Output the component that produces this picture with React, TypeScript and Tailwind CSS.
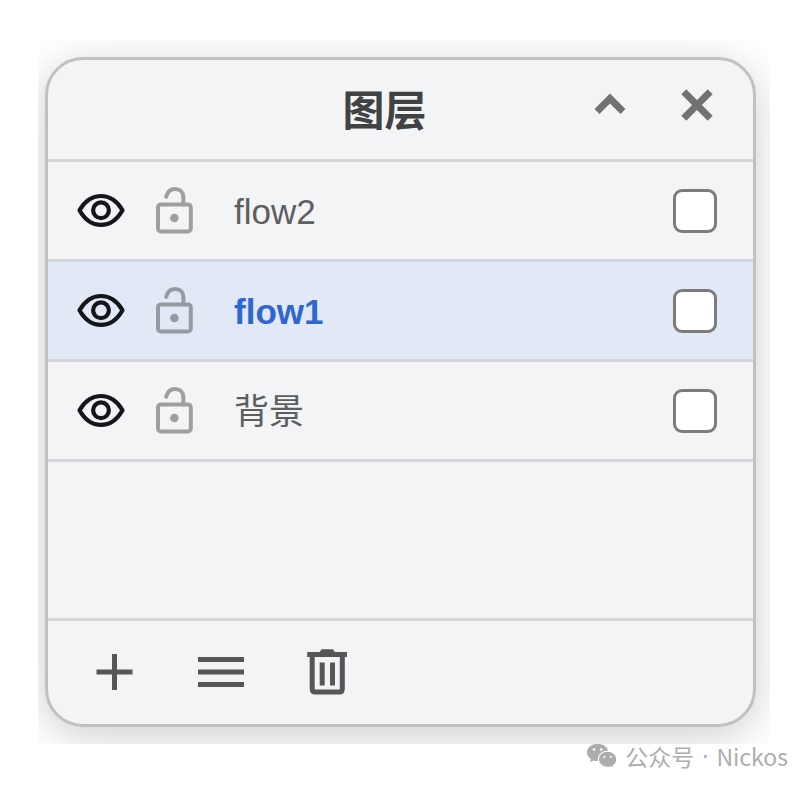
import React, { useState } from 'react';

type Layer = {
  id: string;
  name: string;
};

const layers: Layer[] = [
  { id: 'flow2', name: 'flow2' },
  { id: 'flow1', name: 'flow1' },
  { id: 'background', name: '背景' },
];

function EyeIcon() {
  return (
    <svg width="50" height="36" viewBox="0 0 50 36" fill="none" stroke="currentColor" strokeWidth="4.2">
      <path d="M3.5 17.2C9 7.7 17 3 25 3S41 7.7 46.5 17.2C41 27 33 31.8 25 31.8S9 27 3.5 17.2Z" strokeLinejoin="round" />
      <circle cx="25" cy="17.3" r="7.9" />
    </svg>
  );
}

function UnlockIcon() {
  return (
    <svg width="38" height="48" viewBox="0 0 38 48" fill="none" stroke="currentColor" strokeWidth="4">
      <rect x="2" y="17.4" width="32.8" height="27" rx="3" />
      <path d="M10.2 9.8C11.4 5 14.6 2 19 2C24 2 27.4 5.4 27.4 10.2V17" strokeLinecap="round" />
      <circle cx="18.4" cy="31" r="4.3" fill="currentColor" stroke="none" />
    </svg>
  );
}

function ChevronUpIcon() {
  return (
    <svg width="48" height="48" viewBox="0 0 48 48" fill="none" stroke="currentColor" strokeWidth="7">
      <path d="M12 30.5L25 17.5L38 30.5" />
    </svg>
  );
}

function CloseIcon() {
  return (
    <svg width="48" height="48" viewBox="0 0 48 48" fill="none" stroke="currentColor" strokeWidth="7">
      <path d="M10.8 10.8L37.2 37.2M37.2 10.8L10.8 37.2" />
    </svg>
  );
}

function PlusIcon() {
  return (
    <svg width="48" height="48" viewBox="0 0 48 48" fill="none" stroke="currentColor" strokeWidth="5">
      <path d="M23.5 5V41M5.500 23H41.500" />
    </svg>
  );
}

function MenuIcon() {
  return (
    <svg width="48" height="48" viewBox="0 0 48 48" fill="none" stroke="currentColor" strokeWidth="5">
      <path d="M1 10.500H47M1 23H47M1 35.500H47" />
    </svg>
  );
}

function TrashIcon() {
  return (
    <svg width="48" height="48" viewBox="0 0 48 48" fill="none" stroke="currentColor" strokeWidth="5">
      <path d="M4.200 5.500H44" />
      <path d="M16.500 3.500L18.500 0.300H30L32 3.500V5H16.500Z" fill="currentColor" stroke="none" />
      <path d="M9.200 6V40Q9.200 43 12.200 43H36.300Q39.300 43 39.300 40V6" />
      <path d="M19.200 13.500V36.500M29.500 13.500V36.500" />
    </svg>
  );
}

function WechatIcon() {
  return (
    <svg width="30" height="26" viewBox="0 0 30 26" fill="currentColor">
      <path d="M10.7 0.7C4.8 0.7 0 4.6 0 9.4C0 12.1 1.5 14.5 3.9 16.1L2.9 19.2L6.5 17.4C7.8 17.9 9.2 18.1 10.7 18.1C16.6 18.1 21.4 14.2 21.4 9.4S16.6 0.7 10.7 0.7Z" />
      <path
        d="M20.5 8.2C15.3 8.2 11.3 11.9 11.3 16.3S15.3 24.4 20.5 24.4C21.8 24.4 23 24.2 24.1 23.8L27.2 25.4L26.4 22.6C28.6 21.1 29.9 18.8 29.9 16.3C29.9 11.9 25.7 8.2 20.5 8.2Z"
        stroke="white"
        strokeWidth="1.2"
      />
      <g fill="white">
        <circle cx="7" cy="6.5" r="1.3" />
        <circle cx="14.2" cy="6.5" r="1.3" />
        <circle cx="17.4" cy="13.8" r="1.1" />
        <circle cx="23.8" cy="13.8" r="1.1" />
      </g>
    </svg>
  );
}

function LayerRow({ layer, active, onSelect }: { layer: Layer; active: boolean; onSelect: () => void }) {
  return (
    <li
      className={`flex h-[100px] items-center border-b-[3px] border-[#d6d6da] pl-7 pr-9 ${
        active ? 'bg-[#e1e8f6]' : ''
      }`}
    >
      <button type="button" aria-label="Toggle visibility" className="mr-[30px] text-[#151619]">
        <EyeIcon />
      </button>
      <button type="button" aria-label="Toggle lock" className="mr-10 text-[#707275] opacity-65">
        <UnlockIcon />
      </button>
      <label
        htmlFor={layer.id}
        onClick={onSelect}
        className={`flex-1 pt-[2px] text-[35px] leading-[48px] ${
          active ? 'font-bold text-[#2f66cf]' : 'text-[#5e5e60]'
        }`}
      >
        {layer.name}
      </label>
      <input
        id={layer.id}
        type="checkbox"
        className="size-11 appearance-none rounded-[9px] border-[3px] border-[#7b7d7d] bg-white checked:bg-[#2f66cf]"
      />
    </li>
  );
}

export default function App() {
  const [activeId, setActiveId] = useState('flow1');

  return (
    <div className="min-h-screen bg-white pt-10 font-['Liberation_Sans','Noto_Sans_CJK_SC',sans-serif]">
      <div className="ml-[38px] mr-[42px] overflow-hidden pt-[17px] pr-[14px] pb-[17px] pl-[7px]">
        <section className="overflow-hidden rounded-[38px] border-[3px] border-[#c0c1c2] bg-[#f3f4f6] shadow-[0_8px_40px_rgba(0,0,0,0.2)]">
          {/* Header */}
          <header className="grid h-[102px] grid-cols-[1fr_auto_1fr] items-center border-b-[3px] border-[#d6d7d9] pr-8">
            <h1 className="col-start-2 pt-1 text-[42px] font-bold leading-[60px] text-[#424244]">图层</h1>
            <div className="flex justify-end gap-10 pb-[10px] text-[#717373]">
              <button type="button" aria-label="Collapse">
                <ChevronUpIcon />
              </button>
              <button type="button" aria-label="Close">
                <CloseIcon />
              </button>
            </div>
          </header>

          {/* Layers */}
          <ul className="min-h-[459px] border-b-[3px] border-[#d6d7d9]">
            {layers.map(layer => (
              <LayerRow
                key={layer.id}
                layer={layer}
                active={layer.id === activeId}
                onSelect={() => setActiveId(layer.id)}
              />
            ))}
          </ul>

          {/* Toolbar */}
          <footer className="flex h-[103px] items-center gap-[58px] pl-[43px] text-[#555658]">
            <button type="button" aria-label="Add layer">
              <PlusIcon />
            </button>
            <button type="button" aria-label="Layer menu">
              <MenuIcon />
            </button>
            <button type="button" aria-label="Delete layer">
              <TrashIcon />
            </button>
          </footer>
        </section>
      </div>

      <p className="flex h-6 items-center justify-end gap-2 pr-6 font-['Noto_Sans_CJK_SC',sans-serif] text-[23px] leading-5 text-[#adadad]">
        <WechatIcon />
        <span>公众号</span>
        <span className="font-['Noto_Sans',sans-serif]">·</span>
        <span>Nickos</span>
      </p>
    </div>
  );
}
